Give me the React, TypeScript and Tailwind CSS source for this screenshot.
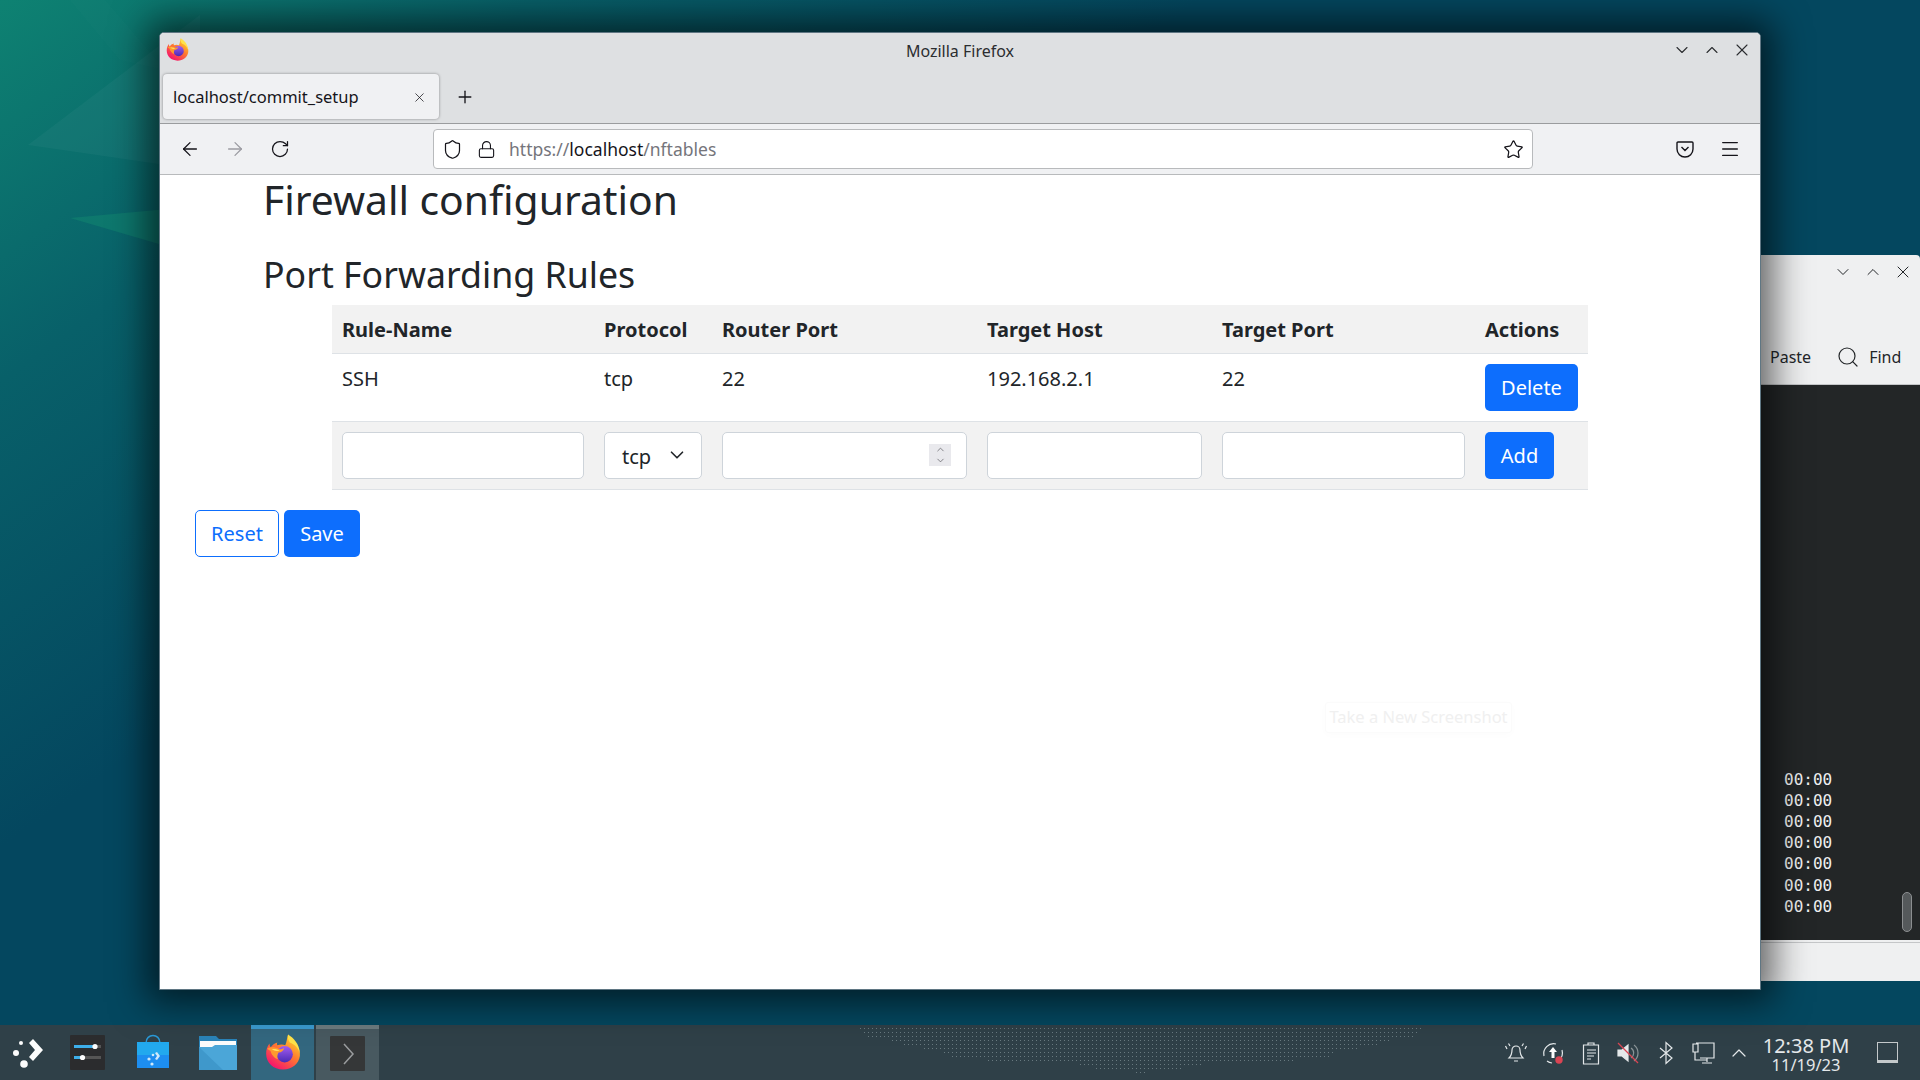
import { ArrowLeft, ArrowRight, ChevronDown, ChevronUp, Lock, Menu, Plus, RotateCw, Search, Shield, Star, X } from 'lucide-react';

const columns = [262, 118, 265, 235, 263, 113];
const headers = ['Rule-Name', 'Protocol', 'Router Port', 'Target Host', 'Target Port', 'Actions'];
const rowTexts = ['SSH', 'tcp', '22', '192.168.2.1', '22'];
const dotRows = [
  [860, 1420], [864, 1417], [868, 1413], [892, 1389], [904, 1377], [924, 1357],
  [944, 1333], [952, 1329], [988, 1293], [1080, 1201], [1096, 1181], [1136, 1145],
];

function Wallpaper() {
  return (
    <svg className="absolute inset-0" width="1920" height="1080" viewBox="0 0 1920 1080">
      <defs>
        <linearGradient id="wall" gradientUnits="userSpaceOnUse" x1="0" y1="0" x2="400" y2="566">
          <stop offset="0" stopColor="#0e8272" />
          <stop offset="0.45" stopColor="#086069" />
          <stop offset="1" stopColor="#04475f" />
        </linearGradient>
      </defs>
      <rect width="1920" height="1080" fill="url(#wall)" />
      <polygon points="28,145 200,15 200,170" fill="#ffffff" opacity="0.035" />
      <polygon points="70,218 200,206 200,256" fill="#12886f" opacity="0.5" />
      <polygon points="70,0 105,0 165,70 120,60" fill="#ffffff" opacity="0.012" />
    </svg>
  );
}

function FirefoxLogo({ size }: { size: number }) {
  return (
    <svg width={size} height={size} viewBox="0 0 64 64">
      <defs>
        <linearGradient id={`fx${size}`} x1="0.85" y1="0.1" x2="0.25" y2="0.95">
          <stop offset="0" stopColor="#ffd52e" />
          <stop offset="0.45" stopColor="#ff7a2f" />
          <stop offset="1" stopColor="#f5156c" />
        </linearGradient>
        <linearGradient id={`fp${size}`} x1="0.5" y1="0" x2="0.5" y2="1">
          <stop offset="0" stopColor="#a35cf0" />
          <stop offset="1" stopColor="#4a2bb5" />
        </linearGradient>
      </defs>
      <path d="M41 1c1 6 7 9 12 15 7 8 10 15 9 23-2 14-14 24-30 24C15 63 2 51 2 35c0-7 2-13 6-18 0 3 1 5 2 7 3-5 7-8 12-9-1 2-1 3 0 5 5-2 10-2 14 0 3-6 3-13 5-19z" fill={`url(#fx${size})`} />
      <path d="M41 1c10 6 20 17 21 33-3-9-9-16-18-19-3-4-4-9-3-14z" fill="#ffe24a" />
      <circle cx="35" cy="36" r="14.500" fill={`url(#fp${size})`} />
      <path d="M4 26c6-4 14-3 20 0 4 2 7 1 10-1-1 5-5 8-10 8-2 4-3 8-1 12-7-3-12-9-13-15-2-1-4-2-6-4z" fill="#ff9a2e" />
      <path d="M12 27c5-1 10 0 14 3-5 1-9 0-14-3z" fill="#ffdf5e" />
    </svg>
  );
}

function KickoffIcon() {
  return (
    <svg width="36" height="36" viewBox="0 0 36 36" fill="#fcfcfc">
      <circle cx="13" cy="8" r="2" />
      <circle cx="8" cy="18" r="3" />
      <circle cx="16" cy="29" r="3.800" />
      <path d="M21 8l4-4 10 11-10 11-4-4 6-7z" />
    </svg>
  );
}

function SettingsIcon() {
  return (
    <svg width="35" height="35" viewBox="0 0 35 35">
      <rect width="35" height="35" rx="1" fill="#2b2c2e" />
      <rect x="4" y="10" width="27" height="3" fill="#555" />
      <rect x="4" y="10" width="20" height="3" fill="#3daee9" />
      <circle cx="25" cy="11.500" r="2.600" fill="#fcfcfc" />
      <rect x="4" y="21" width="27" height="3" fill="#555" />
      <rect x="4" y="21" width="9" height="3" fill="#3daee9" />
      <circle cx="12.500" cy="22.500" r="2.600" fill="#fcfcfc" />
    </svg>
  );
}

function DiscoverIcon() {
  return (
    <svg width="32" height="36" viewBox="0 0 32 36">
      <path d="M9 9c0-10 14-10 14 0" fill="none" stroke="#2a9ad8" strokeWidth="1.400" />
      <rect x="0" y="8" width="32" height="26" fill="#1d8ef0" />
      <rect x="0" y="8" width="32" height="13" fill="#22a9ee" />
      <circle cx="16" cy="21" r="1.300" fill="#cfe9fb" />
      <circle cx="12" cy="25" r="1.600" fill="#cfe9fb" />
      <circle cx="15" cy="30" r="1.600" fill="#cfe9fb" />
      <path d="M18 19l2-1 3 4-3 4-2-1 2-3z" fill="#cfe9fb" />
    </svg>
  );
}

function FolderIcon() {
  return (
    <svg width="38" height="35" viewBox="0 0 38 35">
      <path d="M0 1h17l3 3h18v31H0z" fill="#2a83b8" />
      <rect x="1" y="6" width="36" height="6" fill="#fcfcfc" />
      <path d="M0 12h13l3-2h22v25H0z" fill="#4ba6d8" />
      <path d="M0 12l24 23H0z" fill="#3f98cb" />
    </svg>
  );
}

function KonsoleIcon() {
  return (
    <svg width="35" height="35" viewBox="0 0 35 35">
      <rect width="35" height="35" rx="1" fill="#353738" />
      <path d="M14 8l9 10-9 10" fill="none" stroke="#9a9c9e" strokeWidth="1.500" />
    </svg>
  );
}

function TrayIcon({ name }: { name: string }) {
  const common = { width: 24, height: 24, viewBox: '0 0 24 24', fill: 'none', stroke: '#e4e8ea', strokeWidth: 1.2 };
  if (name === 'bell') {
    return (
      <svg {...common}>
        <path d="M5 17c2-2 3-4 3-8a4 4 0 018 0c0 4 1 6 3 8zM10 20h4M1.500 5L3 8M22.500 5L21 8M4.500 2.500L6 5M19.500 2.500L18 5" />
      </svg>
    );
  }
  if (name === 'update') {
    return (
      <svg {...common}>
        <path d="M3 15a10 10 0 0112-12M21 9a10 10 0 01-4 11M6 20a10 10 0 005 2" />
        <path d="M12 6l4 5h-2.500v6h-3v-6H8z" fill="#fcfcfc" stroke="none" />
        <circle cx="18" cy="19" r="3.700" fill="#da4453" stroke="none" />
      </svg>
    );
  }
  if (name === 'clipboard') {
    return (
      <svg {...common}>
        <path d="M4.500 4h15v19h-15zM9 4V2h6v2M8 9h9M8 12h9M8 15h7M8 18h4" />
      </svg>
    );
  }
  if (name === 'volume') {
    return (
      <svg {...common}>
        <path d="M2 9h4l6-5v16l-6-5H2z" fill="#e4e8ea" />
        <path d="M15 7a6 6 0 010 10M18 4a10 10 0 010 16" stroke="#8a9498" />
        <path d="M2 2l20 20" stroke="#da4453" />
      </svg>
    );
  }
  if (name === 'bluetooth') {
    return (
      <svg {...common}>
        <path d="M6 7l12 10-6 5.500V1.500L18 7 6 17" />
      </svg>
    );
  }
  return (
    <svg {...common}>
      <path d="M5 2h18v15H9M2 3h5v8H2zM4 11v8h12M16 17v4M11 22h10" />
    </svg>
  );
}

function TerminalWindow() {
  return (
    <div className="absolute left-[1761px] top-[255px] flex h-[726px] w-[159px] flex-col overflow-hidden rounded-tr-[4px] bg-[#eff0f1] font-['Noto_Sans',sans-serif] text-[#232629]">
      <div className="flex h-[31px] items-center justify-end gap-[10px] pr-[7px] pt-[2px]">
        <ChevronDown size={20} strokeWidth={1.2} />
        <ChevronUp size={20} strokeWidth={1.2} />
        <X size={20} strokeWidth={1.2} />
      </div>
      <div className="flex h-[99px] items-center border-b border-[#c4c6c8] pt-[44px] text-[16px]">
        <span className="ml-[9px]">Paste</span>
        <Search size={24} strokeWidth={1.2} className="ml-[25px]" />
        <span className="ml-[9px]">Find</span>
      </div>
      <div className="relative flex h-[555px] flex-col justify-end bg-[#232627] pb-[23px] pl-[23px] font-['DejaVu_Sans_Mono',monospace] text-[16px] leading-[21.2px] text-[#eff0f1]">
        {[0, 1, 2, 3, 4, 5, 6].map((i) => (
          <div key={i}>00:00</div>
        ))}
        <div className="absolute left-[141px] top-[507px] h-[40px] w-[10px] rounded-full border border-[#8b8e90] bg-[#55595b]" />
      </div>
      <div className="mt-[2px] flex-1 border-t border-[#c4c6c8]" />
    </div>
  );
}

function FirefoxWindow() {
  return (
    <div className="absolute left-[159px] top-[32px] flex h-[958px] w-[1602px] flex-col overflow-hidden rounded-t-[5px] border border-[#5f7683] bg-white font-['Noto_Sans',sans-serif] text-[#212529] shadow-[0_0_36px_12px_rgba(0,0,0,0.6)]">
      <div className="relative flex h-[36px] items-center justify-center bg-[#dee0e2] text-[16px] text-[#2b2d30]">
        <div className="absolute left-[6px] top-[5px]">
          <FirefoxLogo size={23} />
        </div>
        <span>Mozilla Firefox</span>
        <div className="absolute right-[8px] top-[7px] flex gap-[10px] text-[#2b2d30]">
          <ChevronDown size={20} strokeWidth={1.3} />
          <ChevronUp size={20} strokeWidth={1.3} />
          <X size={20} strokeWidth={1.3} />
        </div>
      </div>
      <div className="flex h-[55px] items-start border-b border-[#9a9c9e] bg-[#dee0e2] pl-[3px] pt-[5px]">
        <div className="flex h-[45px] w-[276px] items-center justify-between rounded-[4px] bg-[#f0f1f3] pl-[10px] pr-[12px] pt-[2px] text-[16.500px] text-[#15141a] shadow-[0_0_3px_rgba(0,0,0,0.4)]">
          <span>localhost/commit_setup</span>
          <X size={15} strokeWidth={1.2} />
        </div>
        <Plus size={20} strokeWidth={1.6} className="ml-[16px] mt-[13px] text-[#15141a]" />
      </div>
      <div className="flex h-[51px] items-center border-b border-[#b8babc] bg-[#f0f1f3] text-[#15141a]">
        <ArrowLeft size={22} strokeWidth={1.4} className="ml-[19px]" />
        <ArrowRight size={22} strokeWidth={1.4} className="ml-[23px] text-[#9c9ca2]" />
        <RotateCw size={20} strokeWidth={1.5} className="ml-[24px]" />
        <div className="ml-[143px] flex h-[40px] w-[1100px] items-center rounded-[4px] border border-[#b8babc] bg-white text-[17.500px]">
          <Shield size={21} strokeWidth={1.4} className="ml-[8px]" />
          <Lock size={19} strokeWidth={1.4} className="ml-[14px]" />
          <span className="ml-[13px] text-[#75757b]">
            https://<span className="text-[#15141a]">localhost</span>/nftables
          </span>
          <Star size={21} strokeWidth={1.4} className="ml-auto mr-[8px]" />
        </div>
        <svg className="ml-[142px]" width="20" height="20" viewBox="0 0 20 20" fill="none" stroke="#15141a" strokeWidth="1.400">
          <path d="M3 3h14a1 1 0 011 1v6a8 8 0 01-16 0V4a1 1 0 011-1zM6.500 8l3.500 3.500L13.500 8" />
        </svg>
        <Menu size={22} strokeWidth={1.4} className="ml-[24px]" />
      </div>
      <main className="relative flex-1 pl-[1px]">
        <h1 className="ml-[102px] text-[40.800px] leading-[48px] font-normal">Firewall configuration</h1>
        <h2 className="ml-[102px] mt-[30px] text-[35.700px] leading-[43px] font-normal">Port Forwarding Rules</h2>
        <table className="ml-[171px] mt-[9px] table-fixed border-collapse text-[20px] leading-[30px]" style={{ width: 1256 }}>
          <colgroup>
            {columns.map((w, i) => (
              <col key={i} style={{ width: w }} />
            ))}
          </colgroup>
          <thead>
            <tr className="h-[48px] border-b border-[#dee2e6] bg-[#f2f2f2]">
              {headers.map((h) => (
                <th key={h} className="px-[10px] pt-[2px] text-left font-bold">
                  {h}
                </th>
              ))}
            </tr>
          </thead>
          <tbody>
            <tr className="h-[68px] border-b border-[#dee2e6]">
              {rowTexts.map((t, i) => (
                <td key={i} className="px-[10px] pb-[11px] pt-[10px] align-top">
                  {t}
                </td>
              ))}
              <td className="px-[10px]">
                <button className="h-[47px] w-[93px] rounded-[5px] bg-[#0d6efd] pt-[2px] text-white">Delete</button>
              </td>
            </tr>
            <tr className="h-[68px] border-b border-[#dee2e6] bg-[#f2f2f2]">
              <td className="px-[10px]">
                <div className="h-[47px] rounded-[5px] border border-[#ced4da] bg-white" />
              </td>
              <td className="px-[10px]">
                <div className="flex h-[47px] w-[98px] items-center justify-between rounded-[5px] border border-[#ced4da] bg-white pl-[17px] pr-[13px]">
                  <span className="pt-[3px]">tcp</span>
                  <ChevronDown size={22} strokeWidth={1.8} />
                </div>
              </td>
              <td className="px-[10px]">
                <div className="flex h-[47px] items-center justify-end rounded-[5px] border border-[#ced4da] bg-white pr-[15px]">
                  <div className="flex h-[22px] w-[22px] flex-col items-center justify-center bg-[#e9e9ed] text-[#55555a]">
                    <ChevronUp size={13} strokeWidth={1.5} />
                    <ChevronDown size={13} strokeWidth={1.5} />
                  </div>
                </div>
              </td>
              <td className="px-[10px]">
                <div className="h-[47px] rounded-[5px] border border-[#ced4da] bg-white" />
              </td>
              <td className="px-[10px]">
                <div className="h-[47px] rounded-[5px] border border-[#ced4da] bg-white" />
              </td>
              <td className="px-[10px]">
                <button className="h-[47px] w-[69px] rounded-[5px] bg-[#0d6efd] pt-[2px] text-white">Add</button>
              </td>
            </tr>
          </tbody>
        </table>
        <div className="ml-[34px] mt-[20px] flex gap-[5px] text-[20px]">
          <button className="h-[47px] w-[84px] rounded-[5px] border border-[#0d6efd] bg-white pt-[2px] text-[#0d6efd]">Reset</button>
          <button className="h-[47px] w-[76px] rounded-[5px] bg-[#0d6efd] pt-[2px] text-white">Save</button>
        </div>
        <div className="absolute left-[1165px] top-[527px] flex h-[31px] w-[187px] items-center justify-center rounded-[3px] border border-[#fbfbfb] text-[16.500px] text-[#f0f0f0] shadow-[0_2px_8px_rgba(0,0,0,0.015)]">
          Take a New Screenshot
        </div>
      </main>
    </div>
  );
}

function Panel() {
  return (
    <div className="absolute bottom-0 left-0 flex h-[55px] w-[1920px] items-stretch gap-[2px] bg-[#2f4048] font-['Noto_Sans',sans-serif]">
      <div className="flex w-[52px] items-center justify-center">
        <KickoffIcon />
      </div>
      <div className="ml-[2px] flex w-[63px] items-center justify-center">
        <SettingsIcon />
      </div>
      <div className="flex w-[63px] items-center justify-center pb-[1px]">
        <DiscoverIcon />
      </div>
      <div className="flex w-[63px] items-center justify-center">
        <FolderIcon />
      </div>
      <div className="flex w-[63px] items-center justify-center border-t-[4px] border-[#3a9bd0] bg-[#33677f] pb-[6px]">
        <FirefoxLogo size={36} />
      </div>
      <div className="flex w-[63px] items-center justify-center border-t-[4px] border-[#6d7c80] bg-[#485960] pb-[3px]">
        <KonsoleIcon />
      </div>
      <div className="ml-auto flex items-center text-[#e4e8ea]">
        {['bell', 'update', 'clipboard', 'volume', 'bluetooth', 'network'].map((n) => (
          <div key={n} className="flex w-[37.500px] justify-center">
            <TrayIcon name={n} />
          </div>
        ))}
        <ChevronUp size={24} strokeWidth={1.2} className="ml-[5px]" />
        <div className="ml-[12px] flex w-[86px] flex-none flex-col items-center whitespace-nowrap">
          <span className="h-[23px] text-[20px] leading-[24px]">12:38 PM</span>
          <span className="h-[15px] text-[16.500px] leading-[15px]">11/19/23</span>
        </div>
        <div className="ml-[28px] mr-[22px] h-[21px] w-[21px] border border-b-[3px] border-[#c4c9cb]" />
      </div>
    </div>
  );
}

function PanelDots() {
  return (
    <svg className="absolute inset-0" width="1920" height="1080" fill="#8fa0a5">
      {dotRows.flatMap(([from, to], r) =>
        Array.from({ length: Math.floor((to - from) / 4) + 1 }, (_, i) => (
          <rect key={`${r}-${i}`} x={from + i * 4} y={1028 + r * 4} width="1" height="1" opacity="0.6" />
        )),
      )}
    </svg>
  );
}

export default function App() {
  return (
    <div className="relative h-[1080px] w-[1920px] overflow-hidden bg-[#04475f]">
      <Wallpaper />
      <Panel />
      <PanelDots />
      <TerminalWindow />
      <FirefoxWindow />
    </div>
  );
}
